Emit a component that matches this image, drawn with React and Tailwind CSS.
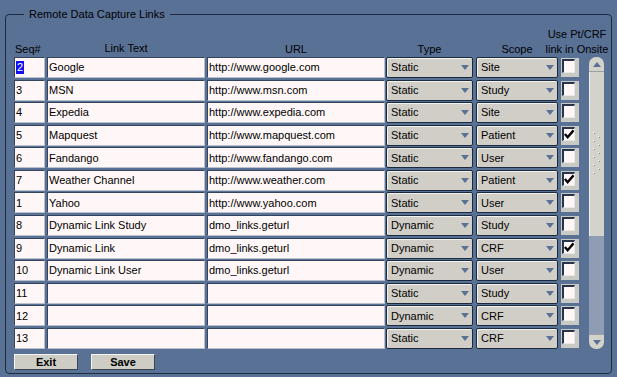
import React from 'react';

const rows = [
  { seq: '2', text: 'Google', url: 'http://www.google.com', type: 'Static', scope: 'Site', on: false },
  { seq: '3', text: 'MSN', url: 'http://www.msn.com', type: 'Static', scope: 'Study', on: false },
  { seq: '4', text: 'Expedia', url: 'http://www.expedia.com', type: 'Static', scope: 'Site', on: false },
  { seq: '5', text: 'Mapquest', url: 'http://www.mapquest.com', type: 'Static', scope: 'Patient', on: true },
  { seq: '6', text: 'Fandango', url: 'http://www.fandango.com', type: 'Static', scope: 'User', on: false },
  { seq: '7', text: 'Weather Channel', url: 'http://www.weather.com', type: 'Static', scope: 'Patient', on: true },
  { seq: '1', text: 'Yahoo', url: 'http://www.yahoo.com', type: 'Static', scope: 'User', on: false },
  { seq: '8', text: 'Dynamic Link Study', url: 'dmo_links.geturl', type: 'Dynamic', scope: 'Study', on: false },
  { seq: '9', text: 'Dynamic Link', url: 'dmo_links.geturl', type: 'Dynamic', scope: 'CRF', on: true },
  { seq: '10', text: 'Dynamic Link User', url: 'dmo_links.geturl', type: 'Dynamic', scope: 'User', on: false },
  { seq: '11', text: '', url: '', type: 'Static', scope: 'Study', on: false },
  { seq: '12', text: '', url: '', type: 'Dynamic', scope: 'CRF', on: false },
  { seq: '13', text: '', url: '', type: 'Static', scope: 'CRF', on: false },
];

const Arrow = ({ up }) => (
  <svg width="8" height="5" viewBox="0 0 8 5" className="block">
    <path d={up ? 'M0 5 L4 0 L8 5 Z' : 'M0 0 L8 0 L4 5 Z'} fill="#5a7196" />
  </svg>
);

const TextField = ({ width, children, first }) => (
  <div
    className={`${width} h-[21px] shrink-0 bg-[#fff7f7] border border-t-[#34445c] border-l-[#34445c] border-r-[#b9c1cb] border-b-[#b9c1cb] flex items-center pl-[1px] overflow-hidden whitespace-nowrap`}
  >
    {first ? <span className="bg-[#1010f0] text-white px-[1px] leading-[13px]">{children}</span> : children}
  </div>
);

const Combo = ({ width, value }) => (
  <div
    className={`${width} h-[21px] shrink-0 bg-[#d0cec6] border border-[#1c2a3e] rounded-[2px] flex items-center justify-between pl-[4px] pr-[3px] shadow-[inset_1px_1px_0_#f2f2ee]`}
  >
    <span>{value}</span>
    <Arrow />
  </div>
);

const Check = ({ on }) => (
  <div className="w-[18px] h-[19px] shrink-0 bg-[#c9cac4] pt-[1px] pl-[1px]">
    <div className="w-[13px] h-[14px] bg-[#fff7f7] border-t-2 border-l-2 border-t-[#27344a] border-l-[#27344a] border-r border-b border-r-[#e8e8e4] border-b-[#e8e8e4] flex items-center justify-center">
      {on && (
        <svg width="11" height="10" viewBox="0 0 11 10" className="block">
          <path d="M1 5 L4 8.5 L10.5 1" stroke="#000" strokeWidth="2.6" fill="none" />
        </svg>
      )}
    </div>
  </div>
);

const Grip = () => (
  <svg width="10" height="44" viewBox="0 0 10 44" className="block">
    {Array.from({ length: 11 }).map((_, i) => (
      <g key={i}>
        <rect x={i % 2 ? 6 : 1} y={i * 4} width="1" height="1" fill="#ffffff" />
        <rect x={i % 2 ? 7 : 2} y={i * 4 + 1} width="1" height="1" fill="#8a8a86" />
      </g>
    ))}
  </svg>
);

const Scrollbar = () => (
  <div className="w-[15px] h-[292px] ml-[10px] flex flex-col">
    <div className="h-[15px] bg-[#d3d3cb] rounded-t-[7px] border-b border-[#9aa0a8] flex items-center justify-center pt-[1px]">
      <Arrow up />
    </div>
    <div className="h-[164px] bg-[#d3d3cb] border-l border-[#eeeeea] flex items-center justify-center">
      <Grip />
    </div>
    <div className="flex-1 bg-[#8f9db4]" />
    <div className="h-[15px] bg-[#d3d3cb] rounded-b-[7px] border-t border-[#9aa0a8] flex items-center justify-center">
      <Arrow />
    </div>
  </div>
);

const Button = ({ label }) => (
  <button className="w-[64px] h-[16px] bg-[#cdcdc5] border border-t-[#f4f4f0] border-l-[#f4f4f0] border-r-[#3a4656] border-b-[#3a4656] text-[11px] font-bold leading-none flex items-center justify-center text-black">
    {label}
  </button>
);

export default function App() {
  return (
    <div className="w-[617px] h-[377px] bg-[#5a7196] overflow-hidden pt-[14px] pl-[5px] font-['Liberation_Sans',Arial,sans-serif] text-[11px] text-black">
      <div className="relative w-[607px] h-[360px] border border-[#1c2d42] rounded-[4px] pl-[8px] pt-[11px]">
        <span className="absolute left-[18px] top-[-8px] bg-[#5a7196] px-[5px] leading-[14px]">
          Remote Data Capture Links
        </span>

        {/* header */}
        <div className="flex items-end h-[31px] leading-[15px]">
          <div className="w-[31px] shrink-0 pl-[1px]">Seq#</div>
          <div className="w-[158px] ml-[2px] shrink-0 text-center pb-[1px]">Link Text</div>
          <div className="w-[178px] ml-[2px] shrink-0 text-center">URL</div>
          <div className="w-[87px] ml-[1px] shrink-0 text-center">Type</div>
          <div className="w-[82px] ml-[3px] shrink-0 text-center">Scope</div>
          <div className="w-[64px] shrink-0 text-center ml-[-13px] whitespace-nowrap">
            Use Pt/CRF
            <br />
            link in Onsite
          </div>
        </div>

        {/* body */}
        <div className="flex">
          <div className="flex flex-col gap-[1.58px]">
            {rows.map((r, i) => (
              <div key={r.seq} className="flex items-center h-[21px]">
                <TextField width="w-[31px]" first={i === 0}>
                  {r.seq}
                </TextField>
                <div className="ml-[2px]">
                  <TextField width="w-[158px]">{r.text}</TextField>
                </div>
                <div className="ml-[2px]">
                  <TextField width="w-[178px]">{r.url}</TextField>
                </div>
                <div className="ml-[1px]">
                  <Combo width="w-[87px]" value={r.type} />
                </div>
                <div className="ml-[3px]">
                  <Combo width="w-[82px]" value={r.scope} />
                </div>
                <div className="ml-[3px]">
                  <Check on={r.on} />
                </div>
              </div>
            ))}
          </div>
          <Scrollbar />
        </div>

        {/* buttons */}
        <div className="flex gap-[13px] mt-[5px]">
          <Button label="Exit" />
          <Button label="Save" />
        </div>
      </div>
    </div>
  );
}
